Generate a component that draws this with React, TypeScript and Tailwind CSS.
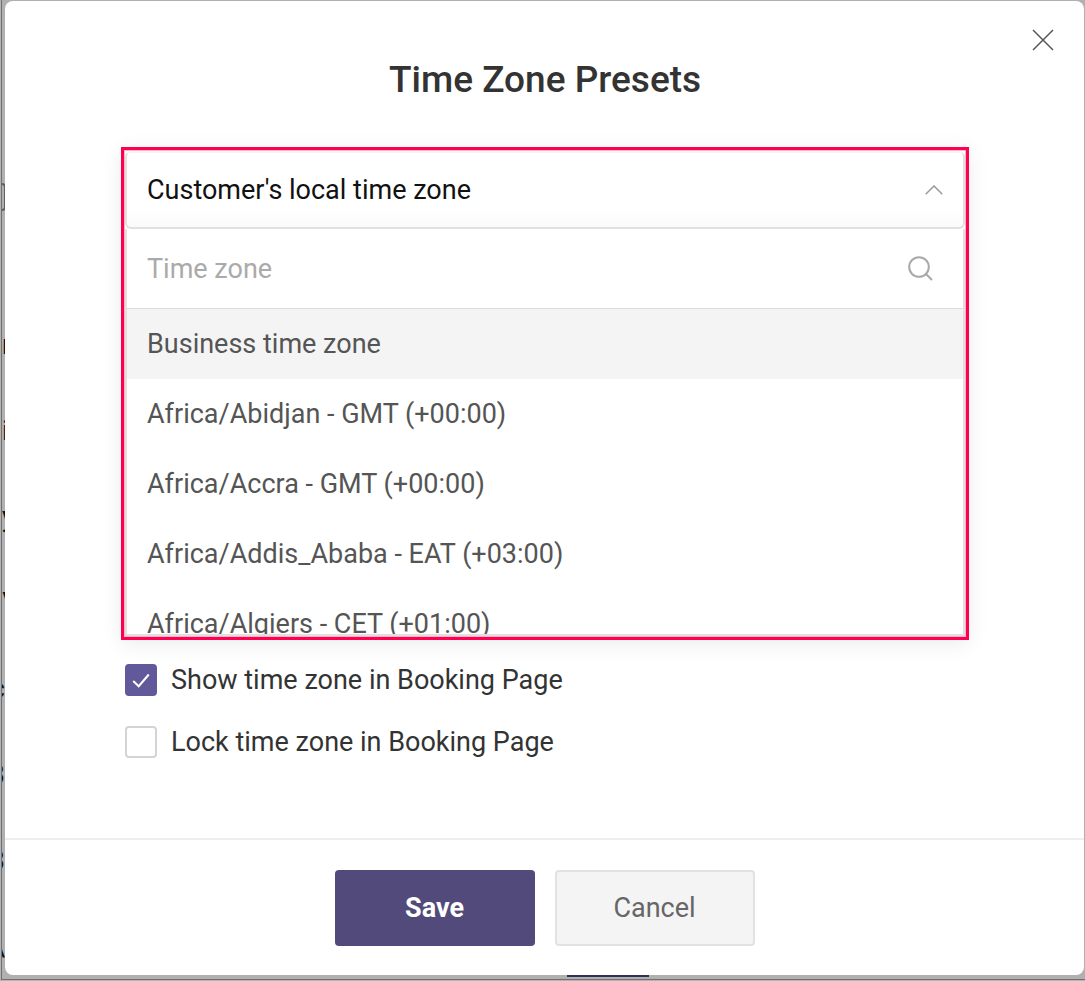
import { useState } from "react";

const zones = [
  "Business time zone",
  "Africa/Abidjan - GMT (+00:00)",
  "Africa/Accra - GMT (+00:00)",
  "Africa/Addis_Ababa - EAT (+03:00)",
  "Africa/Algiers - CET (+01:00)",
];

const pageRows = [
  { text: "r", side: "justify-start" },
  { text: "i", side: "justify-start" },
  { text: "y", side: "justify-start" },
  { text: "\\", side: "justify-start" },
  { text: "c", side: "justify-end" },
  { text: "3", side: "justify-end" },
  { text: "3", side: "justify-end" },
  { text: "\\", side: "justify-end" },
];

function CloseIcon() {
  return (
    <svg width="22" height="22" viewBox="0 0 22 22" fill="none" stroke="#555" strokeWidth="1.5" aria-hidden="true">
      <path d="M1 1l20 20M21 1L1 21" />
    </svg>
  );
}

function ChevronUpIcon() {
  return (
    <svg width="18" height="10" viewBox="0 0 18 10" fill="none" stroke="#999" strokeWidth="1.5" aria-hidden="true">
      <path d="M0.7 9.2L9 1l8.3 8.2" />
    </svg>
  );
}

function SearchIcon() {
  return (
    <svg width="25" height="25" viewBox="0 0 25 25" fill="none" stroke="#a9a9a9" strokeWidth="2" aria-hidden="true">
      <circle cx="11" cy="11" r="9.8" />
      <path d="M18 18l6 6" />
    </svg>
  );
}

function PageBehind() {
  return (
    <div aria-hidden="true" className="absolute inset-0 overflow-hidden border-b border-l border-[#b4b4b4] bg-[#b0b0b0]">
      <div className="h-full border-b border-l border-[#707070] pt-[183px]">
        <div className="h-[28px] w-[4px] rounded-r border-2 border-l-0 border-[#606060]" />
        <div className="mt-[91px] w-[3px] overflow-hidden">
          {pageRows.map((row, i) => (
            <p key={i} className={`flex h-[86px] items-center text-[27px] leading-8 text-[#111] ${row.side}`}>
              {row.text}
            </p>
          ))}
        </div>
      </div>
      <div className="absolute bottom-[3px] left-[566px] h-[2px] w-[82px] bg-[#322e5c]" />
    </div>
  );
}

type CheckOptionProps = {
  id: string;
  label: string;
  initial: boolean;
};

function CheckOption({ id, label, initial }: CheckOptionProps) {
  const [checked, setChecked] = useState(initial);

  return (
    <div className="flex items-center gap-[14px]">
      <span className="relative flex h-8 w-8 shrink-0">
        <input
          id={id}
          type="checkbox"
          checked={checked}
          onChange={(e) => setChecked(e.target.checked)}
          className="h-8 w-8 appearance-none rounded border-2 border-[#d4d4d4] bg-white checked:border-[#62599b] checked:bg-[#62599b]"
        />
        {checked && (
          <svg className="pointer-events-none absolute inset-0" width="32" height="32" viewBox="0 0 32 32" fill="none" stroke="#fff" strokeWidth="2" aria-hidden="true">
            <path d="M8.2 17l5.500 5.200L23.800 10.500" />
          </svg>
        )}
      </span>
      <label htmlFor={id} className="text-[27px] leading-8 text-[#333]">
        {label}
      </label>
    </div>
  );
}

function ZonePicker() {
  const [query, setQuery] = useState("");
  const shown = zones.filter((zone) => zone.toLowerCase().includes(query.toLowerCase()));

  return (
    <div className="border-3 border-[#ff0050] shadow-[0_4px_20px_rgba(0,0,0,0.08)]">
      <div className="border border-[#f9b5ca] bg-white">
        <button
          type="button"
          aria-expanded="true"
          aria-controls="zone-list"
          className="flex h-[78px] w-full items-center justify-between rounded-md border-2 border-[#e0e0e0] border-t-[#f4f4f4] bg-linear-to-b from-white from-75% to-[#fafafa] px-5 text-[27px] leading-8 text-[#111]"
        >
          Customer's local time zone
          <ChevronUpIcon />
        </button>
        <div className="border-2 border-t-0 border-[#e0e0e0]">
          <div className="flex h-[80px] items-center border-b border-[#dcdcdc] pr-[30px] pl-5">
            <input
              type="text"
              aria-label="Time zone"
              placeholder="Time zone"
              value={query}
              onChange={(e) => setQuery(e.target.value)}
              className="min-w-0 flex-1 text-[27px] leading-8 text-[#333] outline-none placeholder:text-[#aaa]"
            />
            <SearchIcon />
          </div>
          <ul id="zone-list" className="max-h-[325px] overflow-hidden">
            {shown.map((zone) => (
              <li key={zone} className="first:bg-[#f4f4f4]">
                <button type="button" className="block h-[70px] w-full px-5 text-left text-[27px] leading-8 text-[#555]">
                  {zone}
                </button>
              </li>
            ))}
          </ul>
        </div>
      </div>
    </div>
  );
}

export default function App() {
  return (
    <div className="relative min-h-screen pt-px pr-px pb-[5px] pl-[5px] font-[Roboto,sans-serif]">
      <PageBehind />
      <main role="dialog" aria-labelledby="dialog-title" className="relative rounded-lg bg-white">
        <button type="button" aria-label="Close" className="absolute top-[28px] right-[30px]">
          <CloseIcon />
        </button>
        <div className="pt-[55px] pr-[115px] pb-20 pl-[116px]">
          <h1 id="dialog-title" className="mb-[43px] text-center text-[37px] leading-[48px] font-medium text-[#333]">
            Time Zone Presets
          </h1>
          <ZonePicker />
          <div className="mt-6 flex flex-col gap-[30px] pl-1">
            <CheckOption id="show-zone" label="Show time zone in Booking Page" initial={true} />
            <CheckOption id="lock-zone" label="Lock time zone in Booking Page" initial={false} />
          </div>
        </div>
        <div className="flex justify-center gap-5 border-t-2 border-[#eee] pt-[30px] pb-[29px]">
          <button type="submit" className="h-[76px] w-[200px] rounded bg-[#514a7b] text-[27px] leading-8 font-bold text-white">
            Save
          </button>
          <button type="button" className="h-[76px] w-[200px] rounded border-2 border-[#e2e2e2] bg-[#f4f4f4] text-[27px] leading-8 text-[#666]">
            Cancel
          </button>
        </div>
      </main>
    </div>
  );
}
